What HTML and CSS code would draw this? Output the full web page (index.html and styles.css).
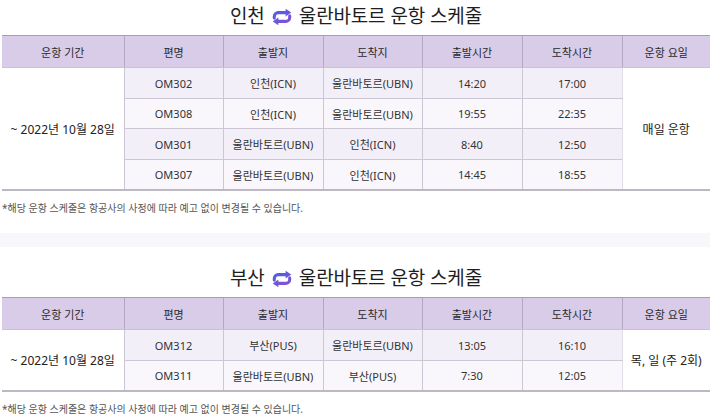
FILE: index.html
```html
<!DOCTYPE html>
<html lang="ko">
<head>
<meta charset="utf-8">
<title>운항 스케줄</title>
<link rel="stylesheet" href="styles.css">
</head>
<body>
<svg width="0" height="0" class="defs" aria-hidden="true">
  <defs>
    <linearGradient id="g" x1="0" y1="0" x2="1" y2="1">
      <stop offset="0" stop-color="#4762e2"/>
      <stop offset="1" stop-color="#8b4ed6"/>
    </linearGradient>
  </defs>
</svg>

<section class="schedule first">
  <h2 class="title">인천 <svg class="loop" viewBox="0 0 20 16" width="22" height="18"><path d="M3 9 V7.5 A3.5 3.5 0 0 1 6.5 4 H14" fill="none" stroke="url(#g)" stroke-width="2.8" stroke-linecap="round"/><path d="M13.3 0.5 L18.4 4 L13.3 7.5 Z" fill="url(#g)"/><path d="M17 7 V8.5 A3.5 3.5 0 0 1 13.5 12 H6" fill="none" stroke="url(#g)" stroke-width="2.8" stroke-linecap="round"/><path d="M6.7 8.5 L1.6 12 L6.7 15.5 Z" fill="url(#g)"/></svg> 울란바토르 운항 스케줄</h2>
  <table class="tbl">
    <colgroup>
      <col class="c1"><col class="c2"><col class="c3"><col class="c4"><col class="c5"><col class="c6"><col class="c7">
    </colgroup>
    <thead>
      <tr><th>운항 기간</th><th>편명</th><th>출발지</th><th>도착지</th><th>출발시간</th><th>도착시간</th><th>운항 요일</th></tr>
    </thead>
    <tbody>
      <tr class="odd"><td class="period" rowspan="4">~ 2022년 10월 28일</td><td>OM302</td><td>인천(ICN)</td><td>울란바토르(UBN)</td><td>14:20</td><td>17:00</td><td class="days" rowspan="4">매일 운항</td></tr>
      <tr class="even"><td>OM308</td><td>인천(ICN)</td><td>울란바토르(UBN)</td><td>19:55</td><td>22:35</td></tr>
      <tr class="odd"><td>OM301</td><td>울란바토르(UBN)</td><td>인천(ICN)</td><td>8:40</td><td>12:50</td></tr>
      <tr class="even last"><td>OM307</td><td>울란바토르(UBN)</td><td>인천(ICN)</td><td>14:45</td><td>18:55</td></tr>
    </tbody>
  </table>
  <p class="note">*해당 운항 스케줄은 항공사의 사정에 따라 예고 없이 변경될 수 있습니다.</p>
</section>

<div class="band"></div>

<section class="schedule second">
  <h2 class="title">부산 <svg class="loop" viewBox="0 0 20 16" width="22" height="18"><path d="M3 9 V7.5 A3.5 3.5 0 0 1 6.5 4 H14" fill="none" stroke="url(#g)" stroke-width="2.8" stroke-linecap="round"/><path d="M13.3 0.5 L18.4 4 L13.3 7.5 Z" fill="url(#g)"/><path d="M17 7 V8.5 A3.5 3.5 0 0 1 13.5 12 H6" fill="none" stroke="url(#g)" stroke-width="2.8" stroke-linecap="round"/><path d="M6.7 8.5 L1.6 12 L6.7 15.5 Z" fill="url(#g)"/></svg> 울란바토르 운항 스케줄</h2>
  <table class="tbl">
    <colgroup>
      <col class="c1"><col class="c2"><col class="c3"><col class="c4"><col class="c5"><col class="c6"><col class="c7">
    </colgroup>
    <thead>
      <tr><th>운항 기간</th><th>편명</th><th>출발지</th><th>도착지</th><th>출발시간</th><th>도착시간</th><th>운항 요일</th></tr>
    </thead>
    <tbody>
      <tr class="odd"><td class="period" rowspan="2">~ 2022년 10월 28일</td><td>OM312</td><td>부산(PUS)</td><td>울란바토르(UBN)</td><td>13:05</td><td>16:10</td><td class="days" rowspan="2">목, 일 (주 2회)</td></tr>
      <tr class="even last"><td>OM311</td><td>울란바토르(UBN)</td><td>부산(PUS)</td><td>7:30</td><td>12:05</td></tr>
    </tbody>
  </table>
  <p class="note">*해당 운항 스케줄은 항공사의 사정에 따라 예고 없이 변경될 수 있습니다.</p>
</section>
</body>
</html>
```

FILE: styles.css
```css
html, body {
  margin: 0;
  padding: 0;
  background: #ffffff;
}
body {
  font-family: "Noto Sans", "Noto Sans CJK KR", sans-serif;
  color: #333;
  width: 710px;
  overflow: hidden;
}
.defs {
  position: absolute;
  width: 0;
  height: 0;
}
.schedule {
  padding-left: 2px;
}
.first {
  padding-top: 0;
}
.second {
  padding-top: 15px;
}
.title {
  margin: 0 0 5px;
  text-align: center;
  font-family: "Noto Sans CJK KR", sans-serif;
  font-size: 19px;
  font-weight: 400;
  line-height: 30px;
  height: 30px;
  color: #1e1e1e;
  letter-spacing: -0.2px;
}
.loop {
  vertical-align: -3px;
  margin: 0 1px;
}
.tbl {
  width: 708px;
  border-collapse: collapse;
  table-layout: fixed;
  font-size: 11px;
  color: #333;
}
.c1 { width: 122px; }
.c2 { width: 99px; }
.c3 { width: 100px; }
.c4 { width: 99px; }
.c5 { width: 100px; }
.c6 { width: 100px; }
.c7 { width: 88px; }
.tbl th {
  background: #d9cce9;
  font-weight: 400;
  height: 31px;
  padding: 0;
  border-top: 1px solid #a89bb8;
  border-bottom: 1px solid #c9bfd6;
  border-left: 1px solid #b4a8c3;
  color: #2a2a2a;
}
.tbl th:first-child {
  border-left: none;
}
.tbl td {
  padding: 0;
  text-align: center;
  border: 1px solid #cdc6d4;
  border-right: none;
}
.tbl tr.odd td {
  height: 30px;
  background: #f3eff9;
}
.tbl tr.even td {
  height: 29px;
  background: #f9f7fc;
}
.tbl tr.last td,
.tbl td.period,
.tbl td.days {
  border-bottom: 2px solid #bdb8c2;
}
.tbl tr td.period {
  background: #ffffff;
  border-left: none;
  font-size: 12px;
  color: #222;
}
.tbl tr td.days {
  background: #ffffff;
  font-size: 12px;
  color: #222;
  border-left: 1px solid #e2dde8;
}
.note {
  margin: 10px 0 0;
  font-size: 10px;
  line-height: 14px;
  color: #555;
}
.band {
  height: 14px;
  margin-top: 18px;
  background: #f8f7fc;
}
```
